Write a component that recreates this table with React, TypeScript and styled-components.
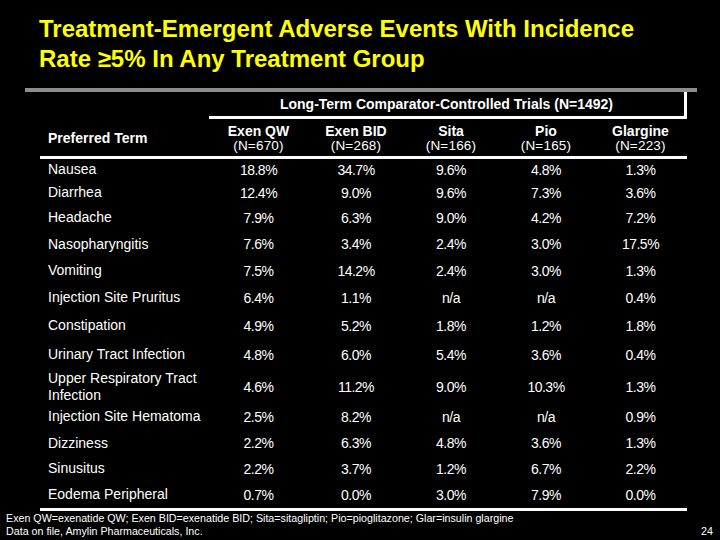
import styled, { createGlobalStyle } from "styled-components";

const GlobalStyle = createGlobalStyle`
  body {
    margin: 0;
    background: #000;
  }
`;

const Slide = styled.div`
  width: 720px;
  height: 540px;
  display: flex;
  flex-direction: column;
  background: #000;
  color: #fff;
  font-family: "Liberation Sans", Arial, sans-serif;
  overflow: hidden;
`;

const Title = styled.h1`
  margin: 0;
  padding: 14px 0 0 39px;
  color: #ffff00;
  font-size: 24px;
  font-weight: 700;
  line-height: 30px;
`;

const GrayBar = styled.div`
  margin: 14px 0 0 25px;
  width: 672px;
  height: 4px;
  background: #8c8c8c;
`;

const Table = styled.div`
  margin-left: 40px;
  width: 647px;
  border-bottom: 3px solid #fff;
`;

const GroupHeader = styled.div`
  margin-left: 169px;
  height: 24px;
  display: flex;
  align-items: center;
  justify-content: center;
  border-bottom: 3px solid #fff;
  border-right: 3px solid #fff;
  font-size: 14px;
  font-weight: 700;
`;

const Row = styled.div<{ $h: number; $rule?: boolean }>`
  display: grid;
  grid-template-columns: 169px 99px 96px 94px 96px 93px;
  align-items: center;
  height: ${(p) => p.$h}px;
  border-bottom: ${(p) => (p.$rule ? "3px solid #fff" : "none")};
`;

const HeadTerm = styled.div`
  padding-left: 8px;
  font-size: 14px;
  font-weight: 700;
`;

const HeadCell = styled.div`
  display: flex;
  flex-direction: column;
  align-items: center;
`;

const HeadName = styled.span`
  font-size: 14px;
  font-weight: 700;
  line-height: 16px;
`;

const HeadCount = styled.span`
  font-size: 13.5px;
  letter-spacing: 0.2px;
  line-height: 14px;
`;

const Term = styled.div`
  padding-left: 8px;
  font-size: 14px;
  line-height: 17px;
`;

const Value = styled.div`
  text-align: center;
  font-size: 14px;
  letter-spacing: -0.5px;
`;

const Footer = styled.div`
  display: flex;
  justify-content: space-between;
  align-items: flex-end;
  padding: 1px 7px 0 6px;
  font-size: 10.7px;
  line-height: 13px;
`;

const Notes = styled.div`
  display: flex;
  flex-direction: column;
`;

const groups = [
  { name: "Exen QW", n: "(N=670)" },
  { name: "Exen BID", n: "(N=268)" },
  { name: "Sita", n: "(N=166)" },
  { name: "Pio", n: "(N=165)" },
  { name: "Glargine", n: "(N=223)" },
];

const rows = [
  { term: "Nausea", h: 21.5, v: ["18.8%", "34.7%", "9.6%", "4.8%", "1.3%"] },
  { term: "Diarrhea", h: 24.5, v: ["12.4%", "9.0%", "9.6%", "7.3%", "3.6%"] },
  { term: "Headache", h: 25.5, v: ["7.9%", "6.3%", "9.0%", "4.2%", "7.2%"] },
  { term: "Nasopharyngitis", h: 27, v: ["7.6%", "3.4%", "2.4%", "3.0%", "17.5%"] },
  { term: "Vomiting", h: 26.5, v: ["7.5%", "14.2%", "2.4%", "3.0%", "1.3%"] },
  { term: "Injection Site Pruritus", h: 27.5, v: ["6.4%", "1.1%", "n/a", "n/a", "0.4%"] },
  { term: "Constipation", h: 28, v: ["4.9%", "5.2%", "1.8%", "1.2%", "1.8%"] },
  { term: "Urinary Tract Infection", h: 30, v: ["4.8%", "6.0%", "5.4%", "3.6%", "0.4%"] },
  { term: "Upper Respiratory Tract Infection", h: 33, v: ["4.6%", "11.2%", "9.0%", "10.3%", "1.3%"] },
  { term: "Injection Site Hematoma", h: 28.5, v: ["2.5%", "8.2%", "n/a", "n/a", "0.9%"] },
  { term: "Dizziness", h: 24.5, v: ["2.2%", "6.3%", "4.8%", "3.6%", "1.3%"] },
  { term: "Sinusitus", h: 26, v: ["2.2%", "3.7%", "1.2%", "6.7%", "2.2%"] },
  { term: "Eodema Peripheral", h: 26.5, v: ["0.7%", "0.0%", "3.0%", "7.9%", "0.0%"] },
];

export default function App() {
  return (
    <Slide>
      <GlobalStyle />
      <Title>
        Treatment-Emergent Adverse Events With Incidence
        <br />
        Rate ≥5% In Any Treatment Group
      </Title>
      <GrayBar />
      <Table>
        <GroupHeader>Long-Term Comparator-Controlled Trials (N=1492)</GroupHeader>
        <Row $h={37} $rule>
          <HeadTerm>Preferred Term</HeadTerm>
          {groups.map((g) => (
            <HeadCell key={g.name}>
              <HeadName>{g.name}</HeadName>
              <HeadCount>{g.n}</HeadCount>
            </HeadCell>
          ))}
        </Row>
        {rows.map((r) => (
          <Row key={r.term} $h={r.h}>
            <Term>{r.term}</Term>
            {r.v.map((v, i) => (
              <Value key={i}>{v}</Value>
            ))}
          </Row>
        ))}
      </Table>
      <Footer>
        <Notes>
          <span>
            Exen QW=exenatide QW; Exen BID=exenatide BID; Sita=sitagliptin; Pio=pioglitazone; Glar=insulin glargine
          </span>
          <span>Data on file, Amylin Pharmaceuticals, Inc.</span>
        </Notes>
        <span>24</span>
      </Footer>
    </Slide>
  );
}
